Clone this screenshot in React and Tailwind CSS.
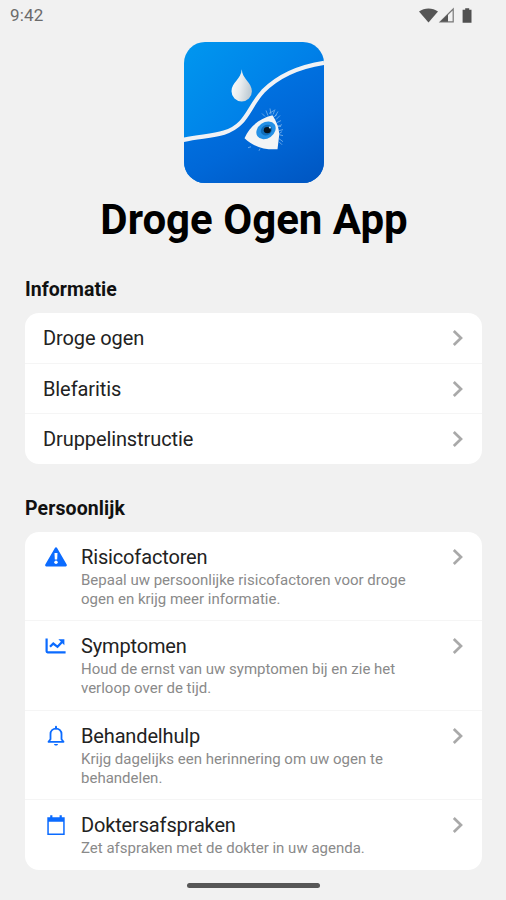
import React from "react";

const infoItems = ["Droge ogen", "Blefaritis", "Druppelinstructie"];

const WarningIcon = () => (
  <svg className="w-6 h-6" viewBox="0 0 24 24">
    <path
      d="M10.900 2.900 1.300 19.600c-.5.9.1 1.800 1 1.800h19.400c.9 0 1.500-.9 1-1.800L13.100 2.900c-.5-.8-1.700-.8-2.200 0z"
      fill="#0b6bff"
    />
    <path d="M10.500 8h3l-.3 6.500h-2.400z" fill="#fff" />
    <circle cx="12" cy="17.300" r="1.700" fill="#fff" />
  </svg>
);

const ChartIcon = () => (
  <svg className="w-6 h-6" viewBox="0 0 24 24" fill="none" stroke="#0b6bff">
    <path d="M2.600 4.500v12.800q0 1 1 1h18" strokeWidth="2.200" />
    <path d="m6 12.800 3.300-3.300 4.200 3.300 4.800-5" strokeWidth="2.300" />
    <path d="M14.400 5.200h6v6z" fill="#0b6bff" stroke="none" />
  </svg>
);

const BellIcon = () => (
  <svg className="w-6 h-6" viewBox="0 0 24 24" fill="none" stroke="#0b6bff">
    <path
      d="M4.500 17.800h15l-2-2.600V10c0-3-2.300-5.400-5.500-5.400S6.500 7 6.500 10v5.200z"
      strokeWidth="1.800"
      strokeLinejoin="round"
    />
    <path d="M12 4.500V2.800" strokeWidth="2" strokeLinecap="round" />
    <path d="M10 19.900h4c-.2 1-1 1.700-2 1.700s-1.800-.7-2-1.700z" fill="#0b6bff" stroke="none" />
  </svg>
);

const CalendarIcon = () => (
  <svg className="w-6 h-6" viewBox="0 0 24 24">
    <path
      d="M3.300 4.300h17.400v17.800H3.300zm1.500 4.500v11.600h14.400V8.800z"
      fill="#0b6bff"
      fillRule="evenodd"
    />
    <path d="M7.300 2.200v3M16.700 2.200v3" stroke="#0b6bff" strokeWidth="2.200" />
  </svg>
);

const personalItems = [
  {
    title: "Risicofactoren",
    lines: ["Bepaal uw persoonlijke risicofactoren voor droge", "ogen en krijg meer informatie."],
    icon: <WarningIcon />,
  },
  {
    title: "Symptomen",
    lines: ["Houd de ernst van uw symptomen bij en zie het", "verloop over de tijd."],
    icon: <ChartIcon />,
  },
  {
    title: "Behandelhulp",
    lines: ["Krijg dagelijks een herinnering om uw ogen te", "behandelen."],
    icon: <BellIcon />,
  },
  {
    title: "Doktersafspraken",
    lines: ["Zet afspraken met de dokter in uw agenda."],
    icon: <CalendarIcon />,
  },
];

const Chevron = () => (
  <svg className="w-3 h-[18px] shrink-0" viewBox="0 0 12 18" fill="none">
    <path d="m1.800 2 7.200 7-7.200 7" stroke="#a9a9a9" strokeWidth="2.700" />
  </svg>
);

const StatusBar = () => (
  <div className="h-8 pl-[10px] pr-[32px] flex items-center justify-between">
    <span className="text-[17px] text-[#6b6b6b] tracking-[0.2px]">9:42</span>
    <svg className="w-[55px] h-[18px]" viewBox="0 0 55 18">
      <path d="M0 4.500C5.500.4 13.500.4 19 4.500L9.500 15.500z" fill="#565656" />
      <path d="M34.200 2v12.800H21.200z" fill="#f1f1f1" stroke="#777" strokeWidth="1.200" />
      <path d="M29 7.300v7.500h-7.800z" fill="#565656" />
      <path d="M46.200 1.200h4V2.700h2.300v13.100h-8.900V2.700h2.600z" fill="#505050" />
    </svg>
  </div>
);

const Logo = () => (
  <svg className="w-[140px] h-[141px]" viewBox="0 0 140 140" preserveAspectRatio="none">
    <defs>
      <linearGradient id="sky" x1="0" y1="0" x2="1" y2="1">
        <stop offset="0" stopColor="#0097ef" />
        <stop offset="0.500" stopColor="#0080e8" />
        <stop offset="1" stopColor="#0060d0" />
      </linearGradient>
      <linearGradient id="skin" x1="0.200" y1="0" x2="0.800" y2="1">
        <stop offset="0" stopColor="#007ae8" />
        <stop offset="0.600" stopColor="#0068d8" />
        <stop offset="1" stopColor="#0058c4" />
      </linearGradient>
      <linearGradient id="drop" x1="0" y1="0" x2="1" y2="0.300">
        <stop offset="0" stopColor="#fff" />
        <stop offset="0.550" stopColor="#e8ecee" />
        <stop offset="1" stopColor="#c2ced6" />
      </linearGradient>
      <clipPath id="tile">
        <rect width="140" height="140" rx="21" />
      </clipPath>
    </defs>
    <g clipPath="url(#tile)">
      <rect width="140" height="140" fill="url(#sky)" />
      <path
        d="M-2 97.500C14 93.500 27 94 40 90 63 83 64 65 79 49 96 32 117 24 142 20.500V142H-2z"
        fill="url(#skin)"
      />
      <path
        d="M-2 97.500C14 93.500 27 94 40 90 63 83 64 65 79 49 96 32 117 24 142 20.500"
        fill="none"
        stroke="#f0f2f5"
        strokeWidth="4.200"
      />
    </g>
    <path
      d="M57.700 27C57.200 37 47.500 40 47.500 49a10.200 10 0 0 0 20.400 0C67.900 40 58.400 37 57.700 27z"
      fill="url(#drop)"
    />
    <g stroke="#8fc0ee" strokeWidth="0.700" fill="none">
      <path d="M81 74l-3-3M84 73l-2-5M87 72l-1-6M89 72l2-5M91 74l3-5M92 77l4-4M93 80l4-2M94 84l4-2M95 88l4-1M95 92l4 1M95 96l4 3M95 99l3 3" />
      <path d="M85 71l5-3M89 75l4-3M93 83l4 1M95 91l3-2M67 104l-3 1M76 106l-1 2" />
    </g>
    <path
      d="M60.500 95.500C66 83 76 76 88.500 72.800 92.500 79 96 87 95 94L93.500 106.500C80 107 70.500 104.500 60.500 95.500z"
      fill="#f3f4f5"
    />
    <ellipse cx="82" cy="87.700" rx="10.400" ry="8" fill="#2490e6" transform="rotate(-35 82 87.700)" />
    <ellipse cx="82.500" cy="87.500" rx="6" ry="5" fill="#0f6dbb" transform="rotate(-35 82.500 87.500)" />
    <ellipse cx="83.300" cy="87.500" rx="3.500" ry="3" fill="#06131f" />
    <circle cx="85.900" cy="84.800" r="1" fill="#bfe3ff" />
  </svg>
);

const App = () => {
  return (
    <div className="w-full h-[900px] bg-[#f1f1f1] font-[Roboto,sans-serif] flex flex-col overflow-hidden">
      <StatusBar />
      <div className="flex flex-col items-center pt-[10px] pl-[2px]">
        <Logo />
        <h1 className="mt-3 text-[42px] leading-[50px] font-bold text-black whitespace-nowrap">
          Droge Ogen App
        </h1>
      </div>

      <div className="pl-[25px] pr-6">
        <h2 className="mt-[33px] h-[23px] text-[19.500px] leading-6 font-bold tracking-[0.050px] text-[#111]">
          Informatie
        </h2>
        <div className="mt-3 h-[151px] rounded-[14px] bg-white flex flex-col divide-y divide-[#f5f5f5]">
          {infoItems.map((item) => (
            <div key={item} className="flex-1 flex items-center justify-between pl-[18px] pr-[18px]">
              <span className="text-[20px] tracking-[-0.100px] text-[#222]">{item}</span>
              <Chevron />
            </div>
          ))}
        </div>

        <h2 className="mt-[33px] h-[23px] text-[19.500px] leading-6 font-bold tracking-[0.100px] text-[#111]">
          Persoonlijk
        </h2>
        <div className="mt-3 h-[338px] rounded-[14px] bg-white divide-y divide-[#f5f5f5]">
          {personalItems.map((item) => (
            <div
              key={item.title}
              className="h-[89.400px] last:h-[69px] flex items-start pl-[19px] pr-[18px] pt-[13px]"
            >
              {item.icon}
              <div className="flex-1 pl-[13px]">
                <div className="text-[20px] leading-6 tracking-[-0.150px] text-[#222]">{item.title}</div>
                <div className="pt-[2px] text-[15px] leading-[19px] text-[#8a8a8a] whitespace-nowrap">
                  {item.lines.map((line) => (
                    <div key={line}>{line}</div>
                  ))}
                </div>
              </div>
              <div className="pt-[3px]">
                <Chevron />
              </div>
            </div>
          ))}
        </div>
      </div>

      <div className="mt-[13px] mx-auto w-[133px] h-[5px] rounded-full bg-[#565656]" />
    </div>
  );
};

export default App;
